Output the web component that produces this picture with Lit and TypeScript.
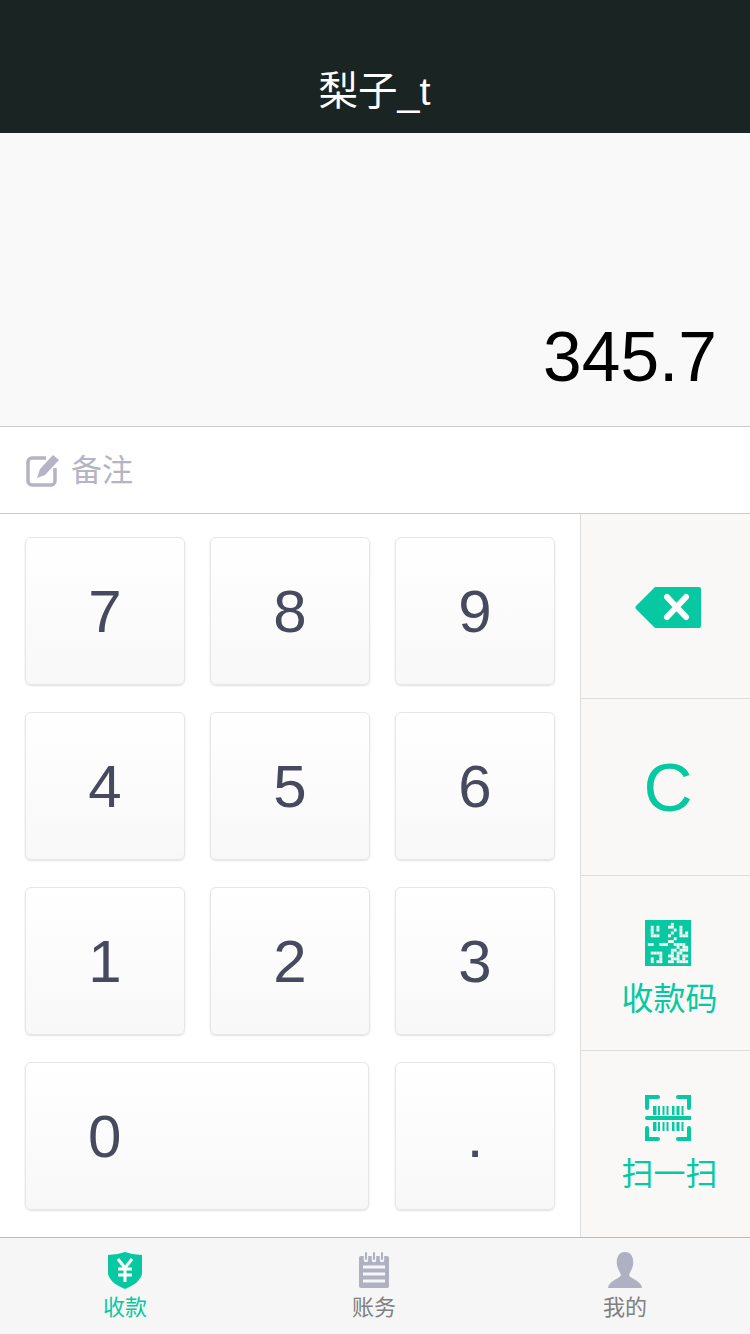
import { LitElement, html, css, svg } from 'lit';
import { customElement } from 'lit/decorators.js';

const qrCells = [
  '................',
  '.........#......',
  '..#.#...##..#...',
  '..#.#.....#.#...',
  '..#......#..#.#.',
  '..###...#...###.',
  '..........#.....',
  '........##......',
  '.##..###..####..',
  '...........#.##.',
  '.........##.###.',
  '..####...#.##...',
  '.....#..##.#.##.',
  '..#..#...###.#..',
  '..#.##..##.####.',
  '................',
];

const qrIcon = html`<svg class="qr" viewBox="0 0 46 46">
  <rect width="46" height="46" fill="#06c9a1"></rect>
  ${qrCells.flatMap((row, y) =>
    [...row].map((c, x) =>
      c === '#' ? svg`<rect x=${x * 2.875} y=${y * 2.875} width="2.9" height="2.9" fill="#f9f8f6"></rect>` : null
    )
  )}
</svg>`;

// x and width of each bar in the barcode
const bars = [
  [8, 3.5],
  [13, 2],
  [17.5, 2],
  [21.5, 2],
  [27, 2.5],
  [31.5, 3],
  [36.5, 2],
];

const scanIcon = html`<svg class="qr" viewBox="0 0 46 46" fill="none" stroke="#06c9a1" stroke-width="4" stroke-linecap="round">
  <path d="M13 2H2V13M33 2H44V13M2 33V44H13M44 33V44H33"></path>
  <path d="M2 23H45"></path>
  ${bars.map(
    ([x, w]) => svg`<path d="M${x + w / 2} 11V20M${x + w / 2} 27V36" stroke-width=${w} stroke-linecap="butt"></path>`
  )}
</svg>`;

@customElement('app-root')
export class AppRoot extends LitElement {
  static styles = css`
    :host {
      display: flex;
      flex-direction: column;
      width: 750px;
      height: 1334px;
      overflow: hidden;
      background: #fff;
      font-family: 'Liberation Sans', 'Noto Sans CJK SC', sans-serif;
    }
    .header {
      height: 133px;
      box-sizing: border-box;
      padding: 67px 1px 0 0;
      background: #1a2423;
      color: #fff;
      font-size: 39.5px;
      line-height: 48px;
      text-align: center;
    }
    .display {
      height: 293px;
      box-sizing: border-box;
      padding: 0 33px 29px 0;
      display: flex;
      align-items: flex-end;
      justify-content: flex-end;
      background: #f9f9f9;
      color: #000;
      font-size: 69.5px;
      line-height: 80px;
    }
    .note {
      height: 88px;
      box-sizing: border-box;
      border-top: 1px solid #ccc;
      border-bottom: 1px solid #ccc;
      padding: 0 0 5px 26px;
      display: flex;
      align-items: center;
      gap: 12px;
      color: #b4b4c4;
      font-size: 31px;
    }
    .note svg {
      width: 33px;
      height: 33px;
      margin-top: 5px;
    }
    .pad {
      flex: 1;
      display: flex;
      min-height: 0;
    }
    .keys {
      width: 580px;
      box-sizing: border-box;
      padding: 23px 25px 0;
      display: grid;
      grid-template-columns: repeat(3, 160px);
      grid-auto-rows: 148px;
      gap: 27px 25px;
      background: #fff;
    }
    .key {
      box-sizing: border-box;
      border: 1px solid #e6e6e6;
      border-radius: 6px;
      background: linear-gradient(#fff, #f8f8f8);
      box-shadow: 0 1px 2px rgba(0, 0, 0, 0.12);
      display: flex;
      align-items: center;
      justify-content: center;
      color: #474a5e;
      font-size: 60px;
    }
    .zero {
      grid-column: span 2;
      width: 344px;
      justify-content: flex-start;
      padding-left: 62px;
    }
    .side {
      width: 170px;
      border-left: 1px solid #ddd;
      display: grid;
      grid-template-rows: 185px 177px 175px 1fr;
      background: #f9f8f6;
      color: #06c9a1;
    }
    .cell {
      display: flex;
      flex-direction: column;
      align-items: center;
      justify-content: center;
      padding-left: 5px;
      border-bottom: 1px solid #ddd;
    }
    .cell:last-child {
      border-bottom: none;
    }
    .cell.qr-cell {
      padding-top: 15px;
    }
    .cell.scan-cell {
      padding-top: 3px;
    }
    .back {
      width: 66px;
      height: 41px;
      margin-top: 2px;
    }
    .clear {
      font-size: 68px;
      line-height: 80px;
    }
    .qr {
      width: 46px;
      height: 46px;
    }
    .label {
      font-size: 32px;
      line-height: 44px;
      margin: 11px 0 0 3px;
    }
    .tabs {
      height: 97px;
      box-sizing: border-box;
      border-top: 1px solid #bbb;
      display: grid;
      grid-template-columns: 250px 248px 254px;
      background: #f6f6f6;
    }
    .tab {
      display: flex;
      flex-direction: column;
      align-items: center;
      padding-top: 14px;
      color: #808080;
      font-size: 22px;
      line-height: 30px;
    }
    .tab.on {
      color: #06c9a1;
    }
    .tab svg {
      width: 36px;
      height: 37px;
      margin-bottom: 4px;
    }
  `;

  private key(label: string, extra = '') {
    return html`<div class="key ${extra}">${label}</div>`;
  }

  render() {
    return html`
      <div class="header">梨子_t</div>
      <div class="display">345.7</div>
      <div class="note">
        <svg viewBox="0 0 33 33" fill="none">
          <path d="M20 4H6a4 4 0 0 0-4 4v19a4 4 0 0 0 4 4h19a4 4 0 0 0 4-4V14" stroke="#b4b4c4" stroke-width="3.5"></path>
          <path d="M27 1l6 5-14 15-8 3 3-9z" fill="#b4b4c4"></path>
        </svg>
        备注
      </div>
      <div class="pad">
        <div class="keys">
          ${['7', '8', '9', '4', '5', '6', '1', '2', '3'].map((k) => this.key(k))}
          ${this.key('0', 'zero')} ${this.key('.')}
        </div>
        <div class="side">
          <div class="cell">
            <svg class="back" viewBox="0 0 66 41">
              <path d="M20 0H64a2 2 0 0 1 2 2V39a2 2 0 0 1-2 2H20L1 22a2.5 2.5 0 0 1 0-3z" fill="#06c9a1"></path>
              <path d="M32 10L51 30M51 10L32 30" stroke="#fff" stroke-width="6" stroke-linecap="round"></path>
            </svg>
          </div>
          <div class="cell"><span class="clear">C</span></div>
          <div class="cell qr-cell">${qrIcon}<span class="label">收款码</span></div>
          <div class="cell scan-cell">${scanIcon}<span class="label">扫一扫</span></div>
        </div>
      </div>
      <div class="tabs">
        <div class="tab on">
          <svg viewBox="0 0 36 37">
            <path d="M1 3Q10 3 18 0Q26 3 35 3V22C33 30 25 34 18 37C11 34 3 30 1 22z" fill="#06c9a1"></path>
            <path d="M11 7L18 16L25 7M18 16V30M11 17H25M11 23H25" fill="none" stroke="#fff" stroke-width="3"></path>
          </svg>
          收款
        </div>
        <div class="tab">
          <svg viewBox="0 0 36 37">
            <path d="M5 4H31a2 2 0 0 1 2 2V34a2 2 0 0 1-2 2H5a2 2 0 0 1-2-2V6a2 2 0 0 1 2-2z" fill="#afb0c2"></path>
            <path d="M7 15H29M7 22H29M7 29H29" stroke="#f6f6f6" stroke-width="3"></path>
            <path d="M10 2V8M18 2V8M26 2V8" stroke="#f6f6f6" stroke-width="4.5" stroke-linecap="round"></path>
            <path d="M10 1V7M18 1V7M26 1V7" stroke="#afb0c2" stroke-width="2" stroke-linecap="round"></path>
          </svg>
          账务
        </div>
        <div class="tab">
          <svg viewBox="0 0 36 37">
            <path d="M18 0C25 0 27 7 26 13C25 18 23 20 22 23C23 27 34 28 35 36H1C2 28 13 27 14 23C13 20 11 18 10 13C9 7 11 0 18 0z" fill="#afb0c2"></path>
          </svg>
          我的
        </div>
      </div>
    `;
  }
}
